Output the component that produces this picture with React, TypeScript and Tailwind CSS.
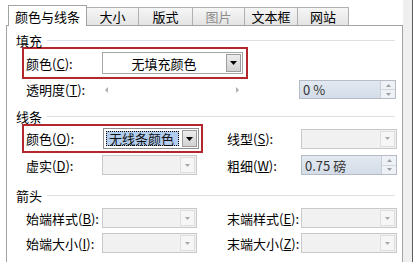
import React from 'react';

const Acc = ({ k }: { k: string }) => <span className="underline">{k}</span>;

function Label({ text, k, w }: { text: string; k: string; w: string }) {
  return (
    <div className={`${w} shrink-0 whitespace-nowrap leading-none`}>
      {text}(<Acc k={k} />):
    </div>
  );
}

function Arrow({ color }: { color: string }) {
  return (
    <svg width="7" height="4" viewBox="0 0 7 4">
      <path d="M0 0h7L3.5 4z" fill={color} />
    </svg>
  );
}

function DisabledCombo({ w }: { w: string }) {
  return (
    <div className={`${w} h-full flex border border-[#c9c9c9] bg-[#f1f1f1]`}>
      <div className="flex-1" />
      <div className="w-[15px] m-px border border-[#dedede] bg-[#f6f6f6] flex items-center justify-center">
        <svg width="5" height="3" viewBox="0 0 5 3">
          <path d="M0 0h5L2.5 3z" fill="#a8a8a8" />
        </svg>
      </div>
    </div>
  );
}

function SpinBox({ value, w }: { value: string; w: string }) {
  return (
    <div className={`${w} h-full flex border border-[#b5bcc6] bg-gradient-to-b from-[#e3e9f1] to-[#d3dce8]`}>
      <div className="flex-1 flex items-center pl-[3px] text-[#333] leading-none">{value}</div>
      <div className="w-[15px] flex flex-col border-l border-[#c8ced6] bg-[#eef1f5]">
        <div className="flex-1 flex items-center justify-center border-b border-[#d4d8de]">
          <svg width="5" height="3" viewBox="0 0 5 3">
            <path d="M0 3h5L2.5 0z" fill="#a0a0a0" />
          </svg>
        </div>
        <div className="flex-1 flex items-center justify-center">
          <svg width="5" height="3" viewBox="0 0 5 3">
            <path d="M0 0h5L2.5 3z" fill="#a0a0a0" />
          </svg>
        </div>
      </div>
    </div>
  );
}

function Header({ title, mt }: { title: string; mt: string }) {
  return (
    <div className={`flex items-center h-[14px] pl-[9px] pr-[7px] ${mt}`}>
      <span className="leading-none">{title}</span>
      <div className="flex-1 h-px bg-[#dcdfe3] ml-[5px]" />
    </div>
  );
}

export default function App() {
  const tabs = [
    { name: '大小', w: 'w-[53px]', off: false },
    { name: '版式', w: 'w-[55px]', off: false },
    { name: '图片', w: 'w-[53px]', off: true },
    { name: '文本框', w: 'w-[54px]', off: false },
    { name: '网站', w: 'w-[52px]', off: false },
  ];

  return (
    <div className="w-[415px] h-[262px] flex overflow-hidden bg-white text-[13px] text-black font-['Noto_Sans_CJK_SC',sans-serif]">
      {/* Dialog body */}
      <div className="w-[403px] flex flex-col pl-[6px]">
        {/* Tab strip */}
        <div className="h-[25px] flex items-end pl-[2px] shrink-0">
          <div className="relative z-10 w-[79px] h-[21px] -mb-px border border-b-0 border-[#a3a3a3] bg-white flex items-center justify-center leading-none">
            颜色与线条
          </div>
          {tabs.map((t) => (
            <div
              key={t.name}
              className={`${t.w} h-[18px] -ml-px border border-b-0 border-[#b0b0b0] bg-gradient-to-b from-[#f6f6f6] to-[#e4e4e4] flex items-center justify-center leading-none ${
                t.off ? 'text-[#8e8e8e]' : 'text-black'
              }`}
            >
              {t.name}
            </div>
          ))}
        </div>

        {/* Panel */}
        <div className="flex-1 border border-b-0 border-[#a3a3a3] bg-white">
          <Header title="填充" mt="mt-[7px]" />

          <div className="ml-[15px] w-[226px] h-[32px] border-2 border-[#b3282d] flex items-center pl-[2px]">
            <Label text="颜色" k="C" w="w-[76px]" />
            <div className="w-[141px] h-[22px] flex border border-[#a6a6a6] bg-white">
              <div className="flex-1 flex items-center justify-center leading-none">无填充颜色</div>
              <div className="w-[15px] m-px border border-[#9c9c9c] bg-gradient-to-b from-[#ececec] to-[#d2d2d2] flex items-center justify-center">
                <Arrow color="#000" />
              </div>
            </div>
          </div>

          <div className="ml-[19px] mt-[1px] h-[19px] flex items-center">
            <Label text="透明度" k="T" w="w-[76px]" />
            <div className="w-[140px] h-full flex items-center justify-between px-[3px]">
              <svg width="3" height="6" viewBox="0 0 3 6">
                <path d="M3 0v6L0 3z" fill="#b0b0b0" />
              </svg>
              <svg width="3" height="6" viewBox="0 0 3 6">
                <path d="M0 0v6L3 3z" fill="#b0b0b0" />
              </svg>
            </div>
            <div className="w-[57px]" />
            <SpinBox value="0 %" w="w-[97px]" />
          </div>

          <Header title="线条" mt="mt-[10px]" />

          <div className="ml-[15px] mt-[1px] h-[29px] flex items-center">
            <div className="w-[181px] h-full border-2 border-[#b3282d] flex items-center pl-[2px]">
              <Label text="颜色" k="O" w="w-[77px]" />
              <div className="w-[96px] h-[21px] flex border border-[#8e8e8e] bg-white">
                <div className="flex-1 m-[2px] bg-[#b3cdee] outline-1 outline-dotted outline-black -outline-offset-1 flex items-center pl-[3px] leading-none text-[#111]">
                  无线条颜色
                </div>
                <div className="w-[15px] m-px border border-[#9c9c9c] bg-gradient-to-b from-[#ececec] to-[#d2d2d2] flex items-center justify-center">
                  <Arrow color="#000" />
                </div>
              </div>
            </div>
            <div className="w-[24px]" />
            <Label text="线型" k="S" w="w-[74px]" />
            <div className="h-[20px] flex">
              <DisabledCombo w="w-[96px]" />
            </div>
          </div>

          <div className="ml-[19px] mt-[2px] h-[20px] flex items-center">
            <Label text="虚实" k="D" w="w-[76px]" />
            <DisabledCombo w="w-[95px]" />
            <div className="w-[30px]" />
            <Label text="粗细" k="W" w="w-[74px]" />
            <SpinBox value="0.75 磅" w="w-[96px]" />
          </div>

          <Header title="箭头" mt="mt-[13px]" />

          <div className="ml-[19px] mt-[6px] h-[20px] flex items-center">
            <Label text="始端样式" k="B" w="w-[76px]" />
            <DisabledCombo w="w-[95px]" />
            <div className="w-[30px]" />
            <Label text="末端样式" k="E" w="w-[74px]" />
            <DisabledCombo w="w-[96px]" />
          </div>

          <div className="ml-[19px] mt-[5px] h-[20px] flex items-center">
            <Label text="始端大小" k="I" w="w-[76px]" />
            <DisabledCombo w="w-[95px]" />
            <div className="w-[30px]" />
            <Label text="末端大小" k="Z" w="w-[74px]" />
            <DisabledCombo w="w-[96px]" />
          </div>
        </div>
      </div>

      {/* Window frame at right */}
      <div className="w-[9px] bg-[#efefef]" />
      <div className="w-px bg-[#5c5c5c]" />
      <div className="flex-1 bg-white" />
    </div>
  );
}
